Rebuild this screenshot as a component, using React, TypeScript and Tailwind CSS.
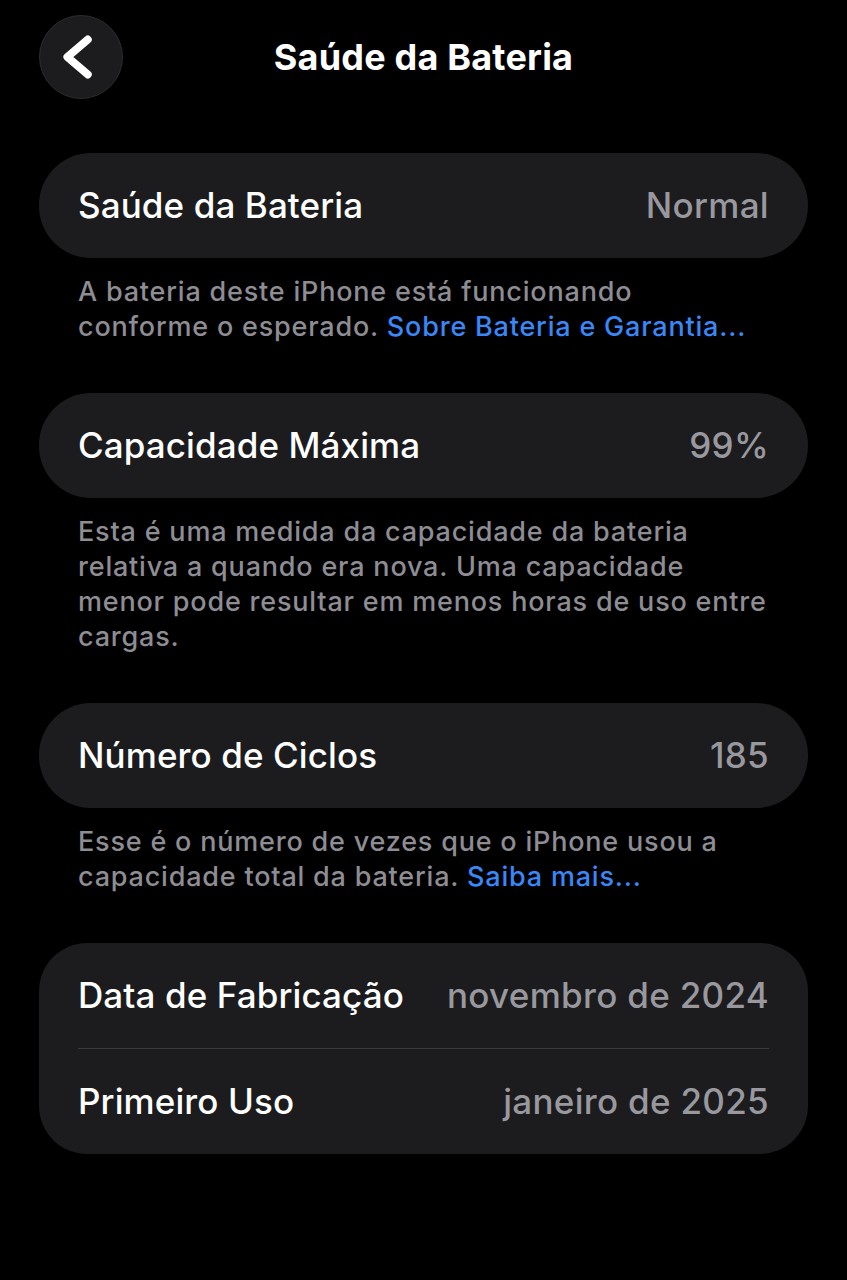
const Row = ({ label, value }: { label: string; value: string }) => (
  <div className="flex items-center justify-between h-[105px] px-[39px]">
    <span className="text-white text-[35px] font-medium tracking-[0.1px]">{label}</span>
    <span className="text-[#98989e] text-[35px] font-medium tracking-[0.3px]">{value}</span>
  </div>
);

const Footer = ({ children }: { children: React.ReactNode }) => (
  <p className="px-[39px] pt-[16px] pb-[49px] text-[27px] leading-[35px] text-[#8d8d93] font-medium tracking-[0.8px]">
    {children}
  </p>
);

export default function App() {
  return (
    <div
      className="min-h-[1280px] w-full bg-black"
      style={{ fontFamily: 'Inter, "Noto Sans", sans-serif' }}
    >
      {/* Header */}
      <div className="relative flex items-center justify-center h-[114px]">
        <button className="absolute left-[39px] top-[15px] w-[84px] h-[84px] rounded-full bg-[#1c1c1e] border border-[#2c2c2e]">
          <svg viewBox="0 0 84 84" className="w-full h-full" fill="none">
            <polyline
              points="49,24 28,42 49,60"
              stroke="white"
              strokeWidth="8"
              strokeLinecap="round"
              strokeLinejoin="round"
            />
          </svg>
        </button>
        <h1 className="text-white text-[36px] font-bold tracking-[0.2px]">Saúde da Bateria</h1>
      </div>

      <div className="px-[39px] pt-[39px]">
        <div className="bg-[#1c1c1e] rounded-[52px]">
          <Row label="Saúde da Bateria" value="Normal" />
        </div>
        <Footer>
          A bateria deste iPhone está funcionando
          <br />
          conforme o esperado. <span className="text-[#3a87f7]">Sobre Bateria e Garantia...</span>
        </Footer>

        <div className="bg-[#1c1c1e] rounded-[52px]">
          <Row label="Capacidade Máxima" value="99%" />
        </div>
        <Footer>
          Esta é uma medida da capacidade da bateria
          <br />
          relativa a quando era nova. Uma capacidade
          <br />
          menor pode resultar em menos horas de uso entre
          <br />
          cargas.
        </Footer>

        <div className="bg-[#1c1c1e] rounded-[52px]">
          <Row label="Número de Ciclos" value="185" />
        </div>
        <Footer>
          Esse é o número de vezes que o iPhone usou a
          <br />
          capacidade total da bateria. <span className="text-[#3a87f7]">Saiba mais...</span>
        </Footer>

        <div className="bg-[#1c1c1e] rounded-[48px]">
          <Row label="Data de Fabricação" value="novembro de 2024" />
          <div className="mx-[39px] h-px bg-[#3a3a3c]" />
          <Row label="Primeiro Uso" value="janeiro de 2025" />
        </div>
      </div>
    </div>
  );
}
